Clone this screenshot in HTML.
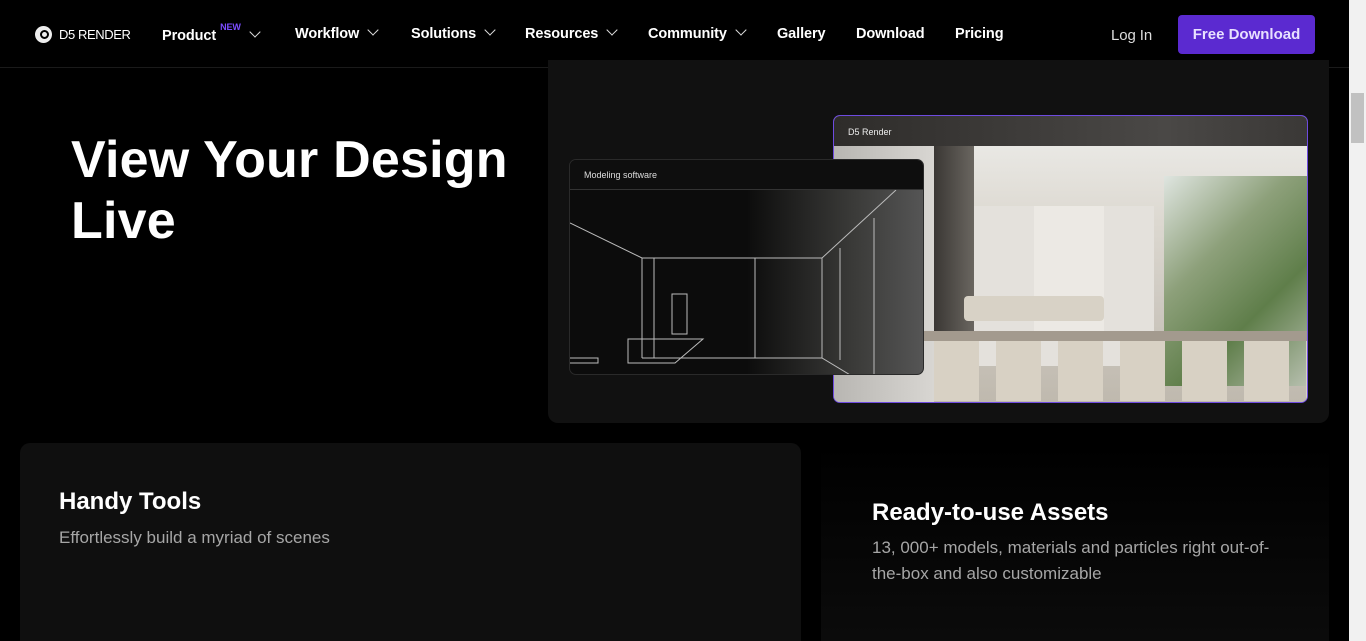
<!DOCTYPE html>
<html><head><meta charset="utf-8"><style>
*{margin:0;padding:0;box-sizing:border-box}
html,body{width:1366px;height:641px;overflow:hidden}
body{background:#000;font-family:"Liberation Sans",sans-serif;color:#fff;position:relative}
.nav{position:absolute;left:0;top:0;width:1349px;height:68px;border-bottom:1px solid #1a1a1a;background:#000}
.nav .it{position:absolute;top:26px;font-size:14.5px;font-weight:bold;color:#fff;letter-spacing:-0.1px}
.chev{display:inline-block;width:8px;height:8px;border-right:1.5px solid #ddd;border-bottom:1.5px solid #ddd;transform:rotate(45deg);margin-left:10px;position:relative;top:-4px}
.logo{position:absolute;left:35px;top:26px;width:17px;height:17px;border-radius:50%;background:#eee}
.logo:after{content:"";position:absolute;left:5px;top:4px;width:5px;height:5px;border:2px solid #000;border-radius:50%}
.btn{position:absolute;left:1178px;top:15px;width:137px;height:39px;background:#5b2ad0;border-radius:4px;font-size:15px;font-weight:bold;color:#e8e0ff;text-align:center;line-height:39px}
h1{position:absolute;left:71px;top:130px;font-size:52px;line-height:61px;font-weight:bold;letter-spacing:0.2px}
.panel{position:absolute;left:548px;top:60px;width:781px;height:363px;background:#111;border-radius:0 0 10px 10px}
.win2{position:absolute;left:833px;top:115px;width:475px;height:288px;border:1.5px solid #6e4be0;border-radius:7px;overflow:hidden;background:#ccc}
.win2 .bar{height:30px;background:linear-gradient(90deg,#2e2c2a,#4a4846 70%,#3a3836);font-size:9px;padding:11px 0 0 14px;color:#eee}
.room{position:absolute;left:0;top:30px;right:0;bottom:0;background:linear-gradient(180deg,#e9e8e4 0%,#dcd8d0 30%,#cfcac2 60%,#bfb9ae 100%)}
.win1{position:absolute;left:569px;top:159px;width:355px;height:216px;border:1px solid #2a2a2a;border-radius:7px;overflow:hidden;background:linear-gradient(90deg,#0c0c0c 0%,#0c0c0c 50%,#3a3a38 80%,#555 100%)}
.win1 .bar{height:30px;background:#0e0e0e;border-bottom:1px solid #333;font-size:9px;padding:10px 0 0 14px;color:#ddd}
.card{position:absolute;background:#0f0f0f;border-radius:10px}
.card h2{position:absolute;font-size:24px;font-weight:bold}
.card p{position:absolute;font-size:17px;color:#a6a6a6;line-height:26px}
.sb{position:absolute;left:1349px;top:0;width:17px;height:641px;background:#f1f1f1}
.sb .th{position:absolute;left:2px;top:93px;width:13px;height:50px;background:#c1c1c1}
</style></head><body>
<div class="nav">
<div class="logo"></div>
<div class="it" style="left:59px;top:27px;font-size:13px;font-weight:normal;letter-spacing:-0.4px">D5 RENDER</div>
<div class="it" style="left:162px">Product<sup style="color:#7b4dff;font-size:9px;margin-left:4px;position:relative;top:-4px">NEW</sup><span class="chev"></span></div>
<div class="it" style="left:295px">Workflow<span class="chev"></span></div>
<div class="it" style="left:411px">Solutions<span class="chev"></span></div>
<div class="it" style="left:525px">Resources<span class="chev"></span></div>
<div class="it" style="left:648px">Community<span class="chev"></span></div>
<div class="it" style="left:777px">Gallery</div>
<div class="it" style="left:856px">Download</div>
<div class="it" style="left:955px">Pricing</div>
<div class="it" style="left:1111px;top:27px;font-weight:normal;color:#ddd;font-size:15px">Log In</div>
<div class="btn">Free Download</div>
</div>
<h1>View Your Design<br>Live</h1>
<div class="panel"></div>
<div class="win2"><div class="bar">D5 Render</div>
<div class="room">
<div style="position:absolute;left:0;top:0;width:100px;height:260px;background:linear-gradient(90deg,#b8b6b2,#d8d6d2)"></div>
<div style="position:absolute;left:100px;top:0;width:40px;height:230px;background:linear-gradient(90deg,#3a3734,#6a6660)"></div>
<div style="position:absolute;left:140px;top:60px;width:180px;height:160px;background:#e4e1dc"></div>
<div style="position:absolute;left:200px;top:60px;width:70px;height:130px;background:#ece9e4"></div>
<div style="position:absolute;left:330px;top:30px;width:145px;height:210px;background:linear-gradient(135deg,#dfe5e0,#8da07a 35%,#5f7e4a 65%,#b8c0b0)"></div>
<div style="position:absolute;left:130px;top:150px;width:140px;height:25px;background:#d8d2c6;border-radius:4px"></div>
<div style="position:absolute;left:30px;top:185px;width:445px;height:10px;background:#a39a8e"></div>
<div style="position:absolute;left:100px;top:195px;width:375px;height:60px;background:repeating-linear-gradient(90deg,#d8d1c4 0 45px,transparent 45px 62px)"></div>
</div></div>
<div class="win1"><div class="bar">Modeling software</div>
<svg width="355" height="186" style="position:absolute;left:0;top:30px" fill="none" stroke="#bbb" stroke-width="1">
<path d="M0 33 L72 68 L252 68 L326 0"/><path d="M72 68V168M84 68V168M185 68V168M252 68 L252 168M270 58V170M304 28V185"/>
<path d="M72 168H252L355 230"/><path d="M102 104H117V144H102Z"/><path d="M58 149H133L105 173H58ZM58 149V160"/><path d="M0 168H28V173H0"/>
</svg></div>
<div class="card" style="left:20px;top:443px;width:781px;height:210px"><h2 style="left:39px;top:45px">Handy Tools</h2><p style="left:39px;top:82px">Effortlessly build a myriad of scenes</p></div>
<div class="card" style="left:821px;top:443px;width:508px;height:210px;background:linear-gradient(180deg,#000,#0c0c0c)"><h2 style="left:51px;top:56px">Ready-to-use Assets</h2><p style="left:51px;top:92px;width:420px">13, 000+ models, materials and particles right out-of-the-box and also customizable</p></div>
<div class="sb"><div class="th"></div></div>
</body></html>
